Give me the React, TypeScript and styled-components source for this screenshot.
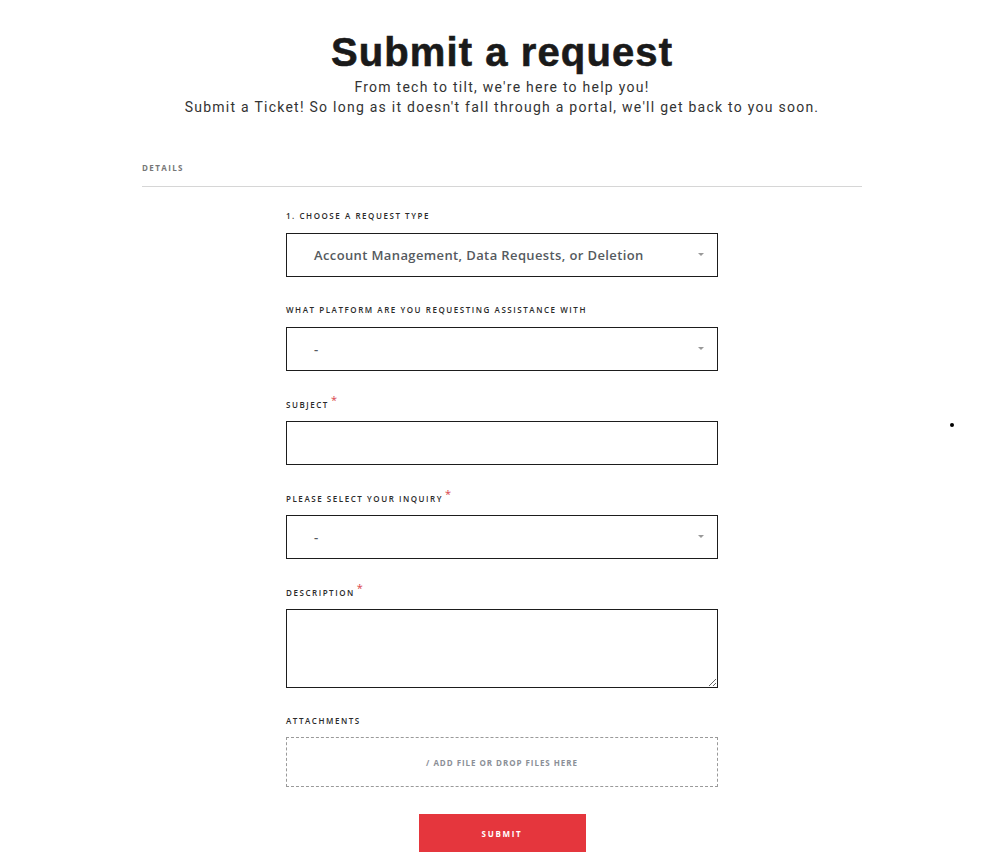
import React from 'react';
import styled, { createGlobalStyle } from 'styled-components';

const GlobalStyle = createGlobalStyle`
  html, body {
    margin: 0;
    padding: 0;
    background: #fff;
  }
  body {
    font-family: "Open Sans", "Liberation Sans", sans-serif;
    color: #1f1f1f;
    padding-right: 4px;
  }
`;

const Page = styled.div`
  position: relative;
  width: 720px;
  margin: 0 auto;
  padding-top: 29px;
  padding-bottom: 3px;
`;

const Title = styled.h1`
  margin: 0;
  font-family: "Liberation Sans", Arial, sans-serif;
  font-weight: 700;
  font-size: 40px;
  line-height: 46px;
  letter-spacing: 1.1px;
  text-align: center;
  color: #1a1a1a;
  -webkit-text-stroke: 0.6px #1a1a1a;
`;

const Subtitle = styled.p`
  margin: 2px 0 0;
  font-family: Roboto, "Liberation Sans", sans-serif;
  font-size: 14px;
  line-height: 20px;
  letter-spacing: 1.25px;
  text-align: center;
  color: #333;
`;

const SectionHeader = styled.div`
  margin-top: 45px;
  padding-bottom: 12px;
  border-bottom: 1px solid #d6d6d6;
  font-size: 8px;
  line-height: 12px;
  font-weight: 700;
  letter-spacing: 1.4px;
  color: #777;
  text-transform: uppercase;
`;

const Form = styled.form`
  width: 432px;
  margin: 23px auto 0;
  display: flex;
  flex-direction: column;
`;

const Field = styled.div`
  display: flex;
  flex-direction: column;
  margin-bottom: 27px;
`;

const Label = styled.label<{ $tight?: boolean }>`
  display: block;
  height: 12px;
  margin-bottom: ${(p) => (p.$tight ? '10px' : '11px')};
  font-size: 8px;
  line-height: 12px;
  font-weight: 600;
  letter-spacing: 1.55px;
  color: #2a2a2a;
  text-transform: uppercase;
`;

const Required = styled.span`
  position: relative;
  top: -4px;
  margin-left: 2px;
  font-size: 11px;
  color: #d9434b;
  font-weight: 400;
`;

const SelectBox = styled.div`
  position: relative;
  height: 44px;
  box-sizing: border-box;
  border: 1px solid #1d1d1d;
  display: flex;
  align-items: center;
  padding: 0 27px;

  &::after {
    content: '';
    position: absolute;
    right: 13px;
    top: 19px;
    border-left: 3px solid transparent;
    border-right: 3px solid transparent;
    border-top: 3px solid #999;
  }
`;

const SelectValue = styled.span`
  font-size: 13px;
  font-weight: 600;
  letter-spacing: 0.38px;
  color: #555a60;
`;

const TextInput = styled.input`
  height: 44px;
  box-sizing: border-box;
  border: 1px solid #1d1d1d;
  border-radius: 0;
  padding: 0 12px;
  font: inherit;
  outline: none;
`;

const TextArea = styled.textarea`
  height: 79px;
  box-sizing: border-box;
  border: 1px solid #1d1d1d;
  border-radius: 0;
  padding: 8px 12px;
  font: inherit;
  resize: vertical;
  outline: none;
`;

const DropZone = styled.div`
  height: 50px;
  box-sizing: border-box;
  border: 1px dashed #9a9a9a;
  display: flex;
  align-items: center;
  justify-content: center;
  font-size: 8px;
  font-weight: 700;
  letter-spacing: 0.95px;
  color: #8b8f97;
  text-transform: uppercase;
`;

const SubmitButton = styled.button`
  align-self: center;
  width: 167px;
  height: 38px;
  margin-top: 0;
  border: none;
  border-radius: 0;
  background: #e5363d;
  color: #fff;
  font-family: "Open Sans", "Liberation Sans", sans-serif;
  font-size: 8px;
  font-weight: 700;
  letter-spacing: 1.7px;
  text-transform: uppercase;
  cursor: pointer;
`;

const StrayDot = styled.span`
  position: absolute;
  left: 808px;
  top: 423px;
  width: 4px;
  height: 4px;
  border-radius: 50%;
  background: #000;
`;

type SelectFieldProps = {
  label: string;
  value: string;
  required?: boolean;
};

function SelectField({ label, value, required }: SelectFieldProps) {
  return (
    <Field>
      <Label>
        {label}
        {required && <Required>*</Required>}
      </Label>
      <SelectBox>
        <SelectValue>{value}</SelectValue>
      </SelectBox>
    </Field>
  );
}

export default function App() {
  return (
    <>
      <GlobalStyle />
      <Page>
        <Title>Submit a request</Title>
        <Subtitle>
          From tech to tilt, we're here to help you!
          <br />
          Submit a Ticket! So long as it doesn't fall through a portal, we'll get back to you soon.
        </Subtitle>

        <SectionHeader>Details</SectionHeader>

        <Form onSubmit={(e) => e.preventDefault()}>
          <SelectField
            label="1. Choose a request type"
            value="Account Management, Data Requests, or Deletion"
          />
          <SelectField label="What platform are you requesting assistance with" value="-" />

          <Field>
            <Label>
              Subject<Required>*</Required>
            </Label>
            <TextInput type="text" />
          </Field>

          <SelectField label="Please select your inquiry" value="-" required />

          <Field>
            <Label>
              Description<Required>*</Required>
            </Label>
            <TextArea />
          </Field>

          <Field>
            <Label $tight>Attachments</Label>
            <DropZone>/ Add file or drop files here</DropZone>
          </Field>

          <SubmitButton type="submit">Submit</SubmitButton>
        </Form>

        <StrayDot />
      </Page>
    </>
  );
}
